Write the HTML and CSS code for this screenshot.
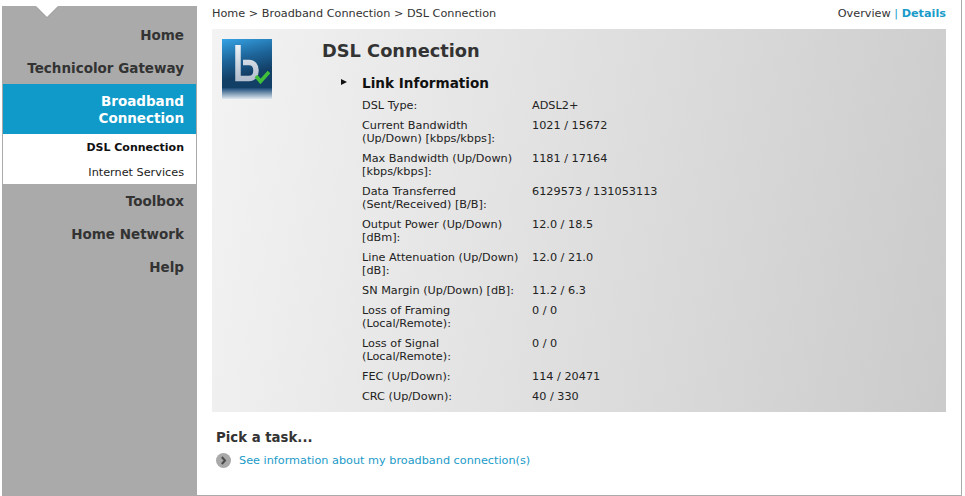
FILE: index.html
```html
<!DOCTYPE html>

<html lang="en">

<head>
    <meta charset="UTF-8">
    <meta name="viewport" content="width=device-width, initial-scale=1.0">
    <title>DSL Connection</title>
    <link rel="stylesheet" href="styles.css">
</head>

<body>
    <div class="page">
        <nav class="sidebar">
            <div class="notch"></div>
            <a class="nav-item">Home</a>
            <a class="nav-item">Technicolor Gateway</a>
            <a class="nav-item active">Broadband Connection</a>
            <div class="subnav">
                <a class="sub-item current">DSL Connection</a>
                <a class="sub-item">Internet Services</a>
            </div>
            <a class="nav-item">Toolbox</a>
            <a class="nav-item">Home Network</a>
            <a class="nav-item">Help</a>
        </nav>

        <main class="content">
            <div class="topbar">
                <span>Home &gt; Broadband Connection &gt; DSL Connection</span>
                <span>Overview <span class="sep">|</span> <b class="details">Details</b></span>
            </div>

            <section class="panel">
                <svg class="logo" width="50" height="60" viewBox="0 0 50 60">
                    <defs>
                        <linearGradient id="tile" x1="0" y1="0" x2="0.25" y2="1">
                            <stop offset="0" stop-color="#36a3e6" />
                            <stop offset="0.45" stop-color="#1d6499" />
                            <stop offset="0.8" stop-color="#123f66" />
                        </linearGradient>
                        <linearGradient id="shine" x1="0" y1="0" x2="0" y2="1">
                            <stop offset="0" stop-color="#1a4a78" />
                            <stop offset="1" stop-color="#dfe8f0" />
                        </linearGradient>
                        <linearGradient id="letter" x1="0" y1="0" x2="0" y2="1">
                            <stop offset="0" stop-color="#eef2f6" />
                            <stop offset="1" stop-color="#b4c0cf" />
                        </linearGradient>
                    </defs>
                    <rect width="50" height="49" fill="url(#tile)" />
                    <rect y="49" width="50" height="11" fill="url(#shine)" />
                    <path d="M16 6V39.5H27C31.5 39.5 34 36 34 31.5C34 27 31.5 23.5 27 23.5H21"
                        fill="none" stroke="url(#letter)" stroke-width="5.5" />
                    <path d="M34 37L38.5 42.5L47 33" fill="none" stroke="#3fbf3a" stroke-width="3.6" />
                </svg>

                <div class="panel-body">
                    <h1>DSL Connection</h1>
                    <h2>Link Information</h2>
                    <table class="stats">
                        <tr><td>DSL Type:</td><td>ADSL2+</td></tr>
                        <tr><td>Current Bandwidth (Up/Down) [kbps/kbps]:</td><td>1021 / 15672</td></tr>
                        <tr><td>Max Bandwidth (Up/Down) [kbps/kbps]:</td><td>1181 / 17164</td></tr>
                        <tr><td>Data Transferred (Sent/Received) [B/B]:</td><td>6129573 / 131053113</td></tr>
                        <tr><td>Output Power (Up/Down) [dBm]:</td><td>12.0 / 18.5</td></tr>
                        <tr><td>Line Attenuation (Up/Down) [dB]:</td><td>12.0 / 21.0</td></tr>
                        <tr><td>SN Margin (Up/Down) [dB]:</td><td>11.2 / 6.3</td></tr>
                        <tr><td>Loss of Framing (Local/Remote):</td><td>0 / 0</td></tr>
                        <tr><td>Loss of Signal (Local/Remote):</td><td>0 / 0</td></tr>
                        <tr><td>FEC (Up/Down):</td><td>114 / 20471</td></tr>
                        <tr><td>CRC (Up/Down):</td><td>40 / 330</td></tr>
                    </table>
                </div>
            </section>

            <section class="tasks">
                <h3>Pick a task...</h3>
                <a class="task-link">
                    <svg width="15" height="15" viewBox="0 0 15 15">
                        <circle cx="7.5" cy="7.5" r="7.5" fill="#a9a9a9" />
                        <path d="M5.8 4L9 7.5L5.8 11" fill="none" stroke="#4a4a4a" stroke-width="2" />
                    </svg>
                    See information about my broadband connection(s)
                </a>
            </section>
        </main>
    </div>
</body>

</html>
```

FILE: styles.css
```css
html,
body {
    margin: 0;
    height: 100%;
    background-color: #ffffff;
}

body {
    font-family: 'DejaVu Sans', Verdana, sans-serif;
    font-size: 11.25px;
    color: #333333;
    overflow: hidden;
}

.page {
    display: flex;
    box-sizing: border-box;
    width: 960px;
    height: 496px;
    margin-left: 2px;
    padding-top: 6px;
    border-right: 1px solid #aaaaaa;
    border-bottom: 1px solid #aaaaaa;
}

.sidebar {
    position: relative;
    flex: none;
    width: 195px;
    padding-top: 21px;
    box-sizing: border-box;
    background-color: #aaaaaa;
}

/* little white arrow at the top of the menu */
.notch {
    position: absolute;
    top: 0;
    left: 34px;
    width: 0;
    height: 0;
    border-left: 11px solid transparent;
    border-right: 11px solid transparent;
    border-top: 11px solid #ffffff;
    filter: drop-shadow(0 1px 0 #999999);
}

.nav-item {
    display: block;
    padding: 0 13px 0 20px;
    font-size: 13.5px;
    font-weight: bold;
    line-height: 17px;
    height: 33px;
    text-align: right;
    color: #333333;
}

.nav-item.active {
    box-sizing: border-box;
    height: 50px;
    margin: -9px 1px 0;
    padding: 9px 12px 0 60px;
    color: #ffffff;
    background-color: #0f9ac9;
}

.subnav {
    margin: 0 1px 9px;
    padding-top: 4px;
    height: 46px;
    background-color: #ffffff;
}

.sub-item {
    display: block;
    height: 25px;
    line-height: 19px;
    padding-right: 12px;
    text-align: right;
    color: #222222;
}

.sub-item.current {
    font-size: 11px;
    font-weight: bold;
    color: #111111;
}

.content {
    flex: 1;
    padding: 0 15px;
}

.topbar {
    display: flex;
    justify-content: space-between;
    height: 23px;
    line-height: 16px;
}

.sep {
    color: #1a9bc9;
}

.details {
    color: #1a9bc9;
}

.panel {
    display: flex;
    height: 383px;
    box-sizing: border-box;
    padding: 10px;
    background: linear-gradient(100deg, #f3f3f3, #cbcbcb);
}

.logo {
    flex: none;
    margin-right: 50px;
}

.panel-body {
    flex: 1;
}

h1 {
    margin: 0;
    font-size: 17.8px;
    line-height: 24px;
    color: #333333;
}

h2 {
    position: relative;
    margin: 12px 0 4px 40px;
    font-size: 13.6px;
    line-height: 17px;
    color: #111111;
}

h2::before {
    content: "";
    position: absolute;
    left: -21px;
    top: 4px;
    border-left: 6px solid #111111;
    border-top: 3px solid transparent;
    border-bottom: 3px solid transparent;
}

.stats {
    margin-left: 40px;
    border-collapse: collapse;
    color: #222222;
}

.stats td {
    padding: 3px 0 4px;
    line-height: 13px;
    vertical-align: top;
}

.stats td:first-child {
    width: 170px;
    padding-right: 8px;
    box-sizing: border-box;
}

.tasks {
    padding: 17px 4px 0;
}

h3 {
    margin: 0 0 6px;
    font-size: 13.3px;
    line-height: 18px;
    color: #333333;
}

.task-link {
    display: flex;
    align-items: center;
    gap: 8px;
    color: #1a9bc9;
}
```
